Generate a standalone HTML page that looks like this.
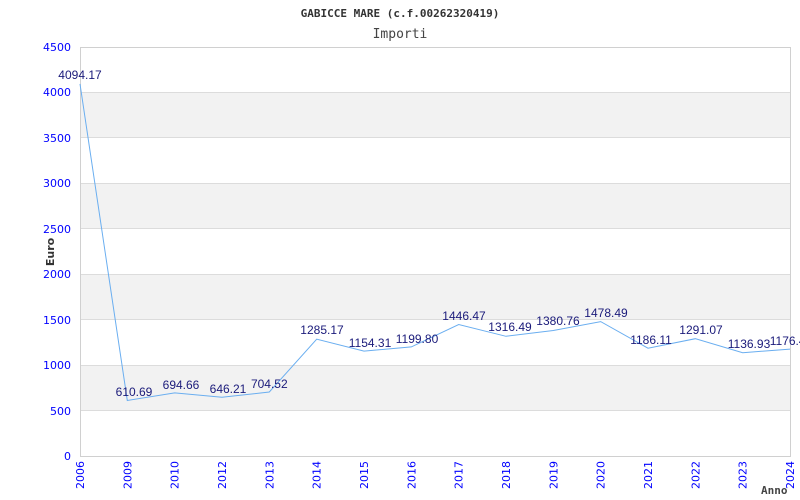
<!DOCTYPE html>
<html><head><meta charset="utf-8"><style>
html,body{margin:0;padding:0;background:#fff;width:800px;height:500px;overflow:hidden}
</style></head><body>
<svg width="800" height="500" xmlns="http://www.w3.org/2000/svg">
<rect width="800" height="500" fill="#fff"/>
<g fill="#f2f2f2">
<rect x="80" y="92.4" width="710" height="45.4"/>
<rect x="80" y="183.3" width="710" height="45.4"/>
<rect x="80" y="274.1" width="710" height="45.5"/>
<rect x="80" y="365" width="710" height="45.5"/>
</g>
<g stroke="#dcdcdc" stroke-width="1">
<line x1="80" y1="92.5" x2="790" y2="92.5"/><line x1="80" y1="137.5" x2="790" y2="137.5"/>
<line x1="80" y1="183.5" x2="790" y2="183.5"/><line x1="80" y1="228.5" x2="790" y2="228.5"/>
<line x1="80" y1="274.5" x2="790" y2="274.5"/><line x1="80" y1="319.5" x2="790" y2="319.5"/>
<line x1="80" y1="365.5" x2="790" y2="365.5"/><line x1="80" y1="410.5" x2="790" y2="410.5"/>
</g>
<rect x="80.5" y="47.5" width="710" height="409" fill="none" stroke="#d0d0d0"/>
<text x="400" y="17" font-family="'DejaVu Sans Mono',monospace" font-weight="bold" font-size="11" fill="#333" text-anchor="middle">GABICCE MARE (c.f.00262320419)</text>
<text x="400" y="38" font-family="'DejaVu Sans Mono',monospace" font-size="13" fill="#444" text-anchor="middle">Importi</text>
<text transform="translate(54,252) rotate(-90)" font-family="'DejaVu Sans',sans-serif" font-weight="bold" font-size="11" fill="#333" text-anchor="middle">Euro</text>
<text x="761" y="494" font-family="'DejaVu Sans Mono',monospace" font-weight="bold" font-size="11" fill="#444">Anno</text>
<g font-family="'DejaVu Sans',sans-serif" font-size="11" fill="#0000ff" text-anchor="end">
<text x="71" y="51">4500</text><text x="71" y="96">4000</text><text x="71" y="142">3500</text>
<text x="71" y="187">3000</text><text x="71" y="233">2500</text><text x="71" y="278">2000</text>
<text x="71" y="324">1500</text><text x="71" y="369">1000</text><text x="71" y="415">500</text>
<text x="71" y="460">0</text>
</g>
<g font-family="'DejaVu Sans',sans-serif" font-size="11" fill="#0000ff" text-anchor="end">
<text transform="translate(84,461) rotate(-90)">2006</text>
<text transform="translate(131.3,461) rotate(-90)">2009</text>
<text transform="translate(178.7,461) rotate(-90)">2010</text>
<text transform="translate(226,461) rotate(-90)">2012</text>
<text transform="translate(273.3,461) rotate(-90)">2013</text>
<text transform="translate(320.7,461) rotate(-90)">2014</text>
<text transform="translate(368,461) rotate(-90)">2015</text>
<text transform="translate(415.3,461) rotate(-90)">2016</text>
<text transform="translate(462.7,461) rotate(-90)">2017</text>
<text transform="translate(510,461) rotate(-90)">2018</text>
<text transform="translate(557.3,461) rotate(-90)">2019</text>
<text transform="translate(604.7,461) rotate(-90)">2020</text>
<text transform="translate(652,461) rotate(-90)">2021</text>
<text transform="translate(699.3,461) rotate(-90)">2022</text>
<text transform="translate(746.7,461) rotate(-90)">2023</text>
<text transform="translate(794,461) rotate(-90)">2024</text>
</g>
<polyline fill="none" stroke="#6aaef0" stroke-width="1" points="80,83.9 127.3,400.5 174.7,392.9 222,397.3 269.3,392 316.7,339.2 364,351.1 411.3,346.9 458.7,324.5 506,336.3 553.3,330.5 600.7,321.6 648,348.2 695.3,338.7 742.7,352.7 790,349.1"/>
<g font-family="'Liberation Sans',Arial,sans-serif" font-size="12" fill="#1a1a7a" text-anchor="middle">
<text x="80" y="79">4094.17</text>
<text x="134" y="396">610.69</text>
<text x="181" y="389">694.66</text>
<text x="228" y="393">646.21</text>
<text x="269.3" y="388">704.52</text>
<text x="322" y="334">1285.17</text>
<text x="370" y="347">1154.31</text>
<text x="417" y="343">1199.80</text>
<text x="464" y="320">1446.47</text>
<text x="510" y="331">1316.49</text>
<text x="558" y="325">1380.76</text>
<text x="606" y="317">1478.49</text>
<text x="651" y="344">1186.11</text>
<text x="701" y="334">1291.07</text>
<text x="749" y="348">1136.93</text>
<text x="791" y="345">1176.41</text>
</g>
</svg>
</body></html>
